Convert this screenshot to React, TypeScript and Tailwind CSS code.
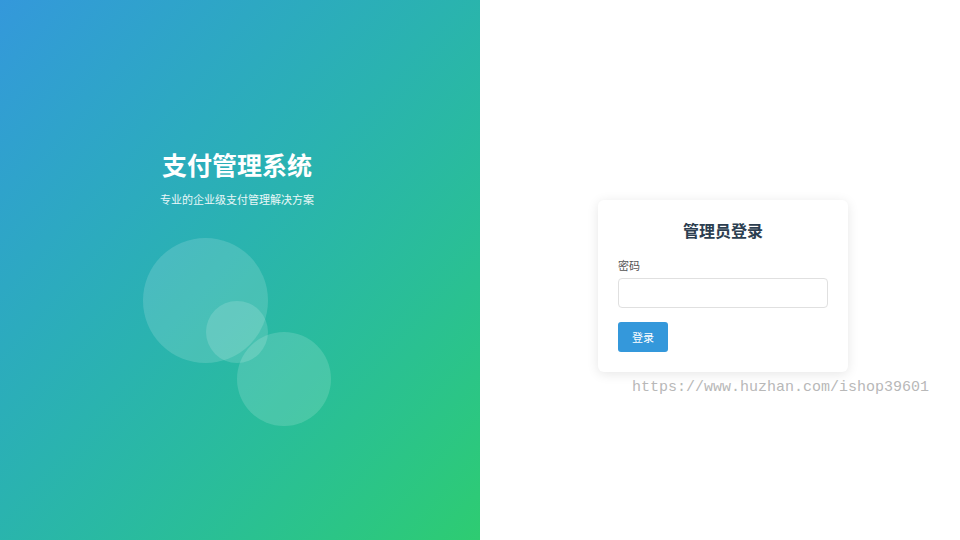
import React from 'react';

const Decor: React.FC = () => (
  <div className="relative mt-[30px] h-[190px] w-[188px]">
    <div className="absolute left-0 top-0 h-[125px] w-[125px] rounded-full bg-white/15" />
    <div className="absolute left-[63px] top-[63px] h-[62px] w-[62px] rounded-full bg-white/15" />
    <div className="absolute left-[94px] top-[94px] h-[94px] w-[94px] rounded-full bg-white/15" />
  </div>
);

export default function App() {
  return (
    <div className="relative flex h-[540px] w-[960px] overflow-hidden font-['Noto_Sans_CJK_SC','Noto_Sans',sans-serif]">
      <div className="flex w-[480px] flex-col items-center bg-gradient-to-br from-[#3498db] to-[#2ecc71] pr-[6px] pt-[146px] text-white">
        <h1 className="text-[25px] font-bold leading-[36px]">支付管理系统</h1>
        <p className="mt-[8px] text-[11px] leading-[18px] text-white/90">专业的企业级支付管理解决方案</p>
        <Decor />
      </div>

      <div className="flex flex-1 justify-center bg-white pl-[6px] pt-[200px]">
        <div className="h-[172px] w-[250px] rounded-md bg-white px-5 pt-[19px] shadow-[0_2px_12px_rgba(0,0,0,0.1)]">
          <h2 className="text-center text-[16px] font-bold leading-[22px] text-[#2c3e50]">管理员登录</h2>
          <label className="mt-[16px] block text-[11px] leading-[16px] text-[#555]">密码</label>
          <input
            type="password"
            className="mt-[5px] block h-[30px] w-full rounded border border-[#e0e0e0] px-2 text-[12px] outline-none"
          />
          <button className="mt-[14px] h-[30px] w-[50px] rounded-[3px] bg-[#3498db] text-[11px] text-white">登录</button>
        </div>
      </div>

      <div className="pointer-events-none absolute left-[632px] top-[378px] font-['Liberation_Mono',monospace] text-[15px] leading-[20px] text-[#b8b8b8]">
        https://www.huzhan.com/ishop39601
      </div>
    </div>
  );
}
